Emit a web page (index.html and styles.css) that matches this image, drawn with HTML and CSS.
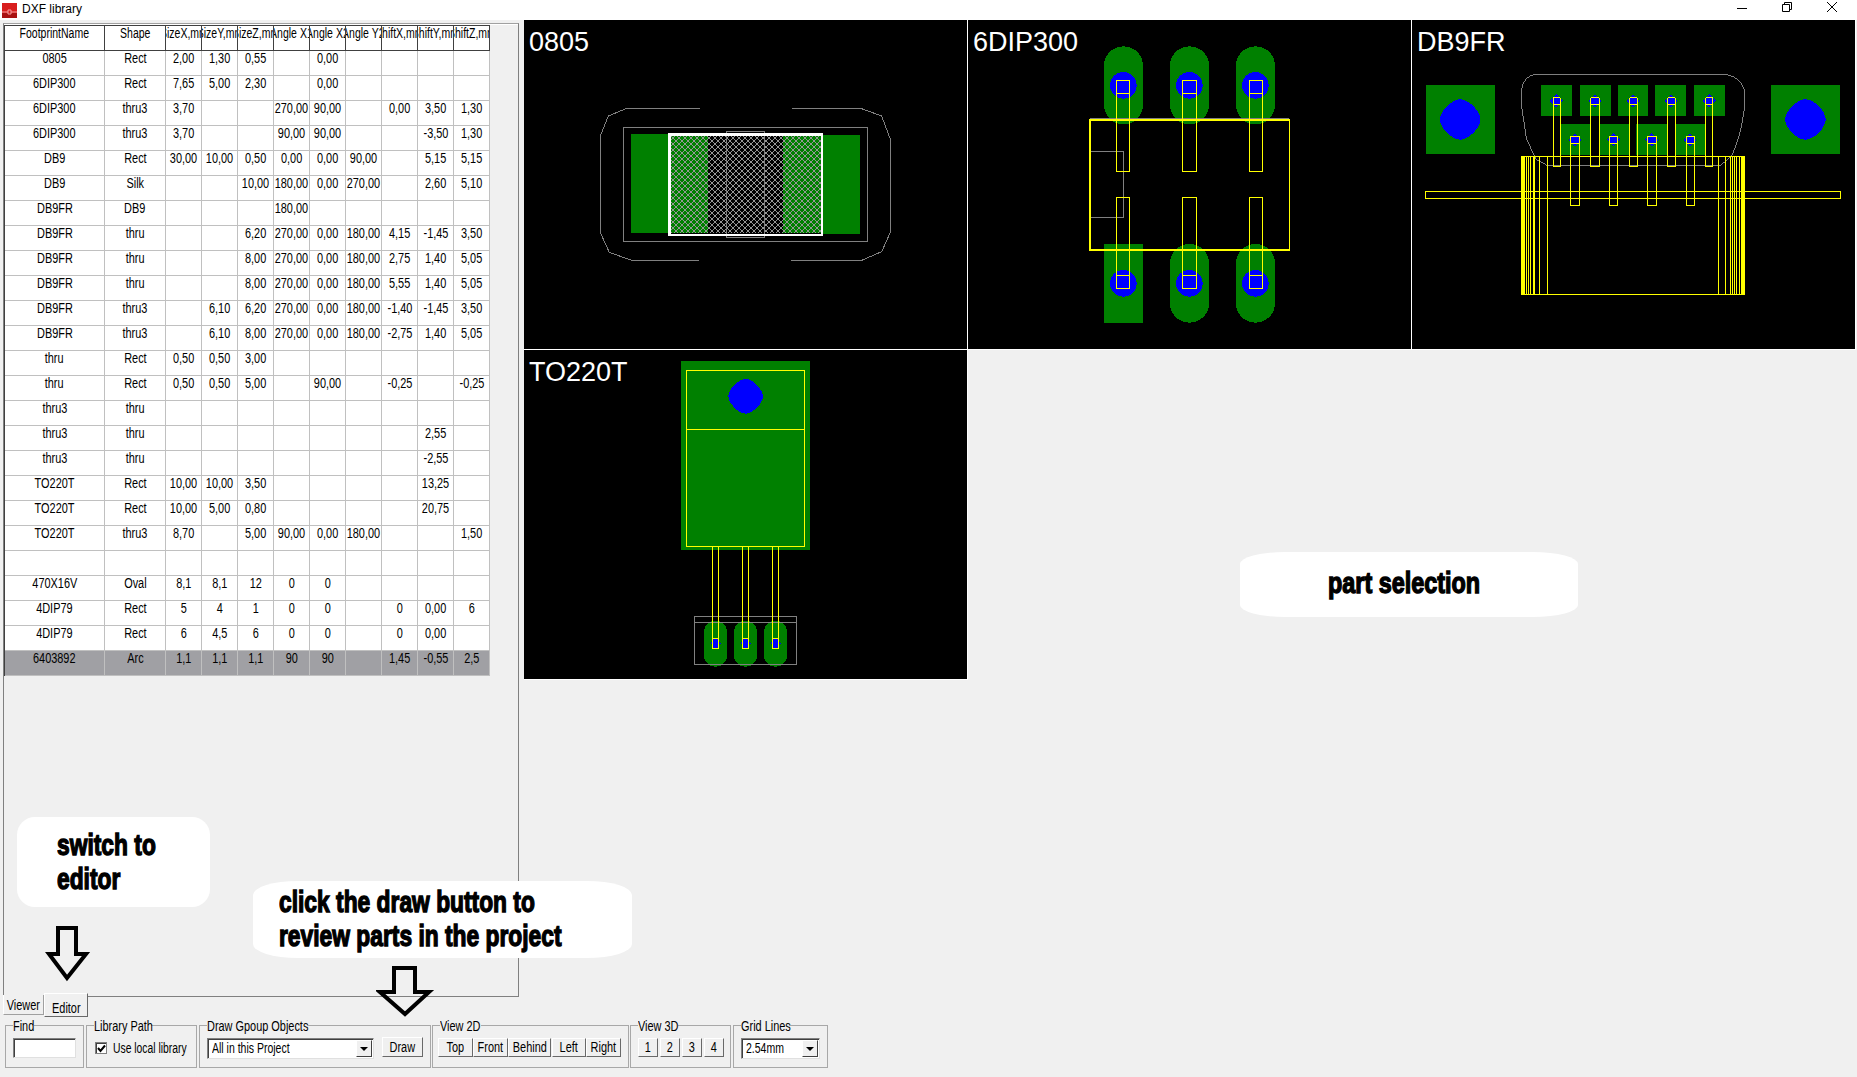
FILE: index.html
```html
<!DOCTYPE html>
<html lang="en">
<head>
<meta charset="utf-8">
<title>DXF library</title>
<link rel="stylesheet" href="styles.css">
</head>
<body>
<div class="window">
  <header class="titlebar">
    <svg class="appicon" width="15" height="15" viewBox="0 0 15 15"><rect width="15" height="15" fill="#d81e1e"/><rect y="10" width="15" height="5" fill="#a81212"/><path d="M0 9H6M9 9H15M6 7H9V11H6Z" fill="none" stroke="#f3a0a0"/></svg>
    <span class="apptitle">DXF library</span>
    <div class="winctl">
      <svg width="12" height="12" viewBox="0 0 12 12"><path d="M1 7.5H11" stroke="#000"/></svg>
      <svg width="12" height="12" viewBox="0 0 12 12"><path d="M1.5 3.5H8.5V10.5H1.5ZM3.5 3.5V1.5H10.5V8.5H8.5" fill="none" stroke="#000"/></svg>
      <svg width="12" height="12" viewBox="0 0 12 12"><path d="M1 1L11 11M11 1L1 11" stroke="#000" fill="none"/></svg>
    </div>
  </header>

  <div class="main">
    <section class="panel">
      <div class="grid">
        <div class="row head"><span><b>FootprintName</b></span><span><b>Shape</b></span><span><b>SizeX,mm</b></span><span><b>SizeY,mm</b></span><span><b>SizeZ,mm</b></span><span><b>Angle X1</b></span><span><b>Angle X2</b></span><span><b>Angle Y2</b></span><span><b>ShiftX,mm</b></span><span><b>ShiftY,mm</b></span><span><b>ShiftZ,mm</b></span></div>
        <div class="row"><span><b>0805</b></span><span><b>Rect</b></span><span><b>2,00</b></span><span><b>1,30</b></span><span><b>0,55</b></span><span></span><span><b>0,00</b></span><span></span><span></span><span></span><span></span></div>
        <div class="row"><span><b>6DIP300</b></span><span><b>Rect</b></span><span><b>7,65</b></span><span><b>5,00</b></span><span><b>2,30</b></span><span></span><span><b>0,00</b></span><span></span><span></span><span></span><span></span></div>
        <div class="row"><span><b>6DIP300</b></span><span><b>thru3</b></span><span><b>3,70</b></span><span></span><span></span><span><b>270,00</b></span><span><b>90,00</b></span><span></span><span><b>0,00</b></span><span><b>3,50</b></span><span><b>1,30</b></span></div>
        <div class="row"><span><b>6DIP300</b></span><span><b>thru3</b></span><span><b>3,70</b></span><span></span><span></span><span><b>90,00</b></span><span><b>90,00</b></span><span></span><span></span><span><b>-3,50</b></span><span><b>1,30</b></span></div>
        <div class="row"><span><b>DB9</b></span><span><b>Rect</b></span><span><b>30,00</b></span><span><b>10,00</b></span><span><b>0,50</b></span><span><b>0,00</b></span><span><b>0,00</b></span><span><b>90,00</b></span><span></span><span><b>5,15</b></span><span><b>5,15</b></span></div>
        <div class="row"><span><b>DB9</b></span><span><b>Silk</b></span><span></span><span></span><span><b>10,00</b></span><span><b>180,00</b></span><span><b>0,00</b></span><span><b>270,00</b></span><span></span><span><b>2,60</b></span><span><b>5,10</b></span></div>
        <div class="row"><span><b>DB9FR</b></span><span><b>DB9</b></span><span></span><span></span><span></span><span><b>180,00</b></span><span></span><span></span><span></span><span></span><span></span></div>
        <div class="row"><span><b>DB9FR</b></span><span><b>thru</b></span><span></span><span></span><span><b>6,20</b></span><span><b>270,00</b></span><span><b>0,00</b></span><span><b>180,00</b></span><span><b>4,15</b></span><span><b>-1,45</b></span><span><b>3,50</b></span></div>
        <div class="row"><span><b>DB9FR</b></span><span><b>thru</b></span><span></span><span></span><span><b>8,00</b></span><span><b>270,00</b></span><span><b>0,00</b></span><span><b>180,00</b></span><span><b>2,75</b></span><span><b>1,40</b></span><span><b>5,05</b></span></div>
        <div class="row"><span><b>DB9FR</b></span><span><b>thru</b></span><span></span><span></span><span><b>8,00</b></span><span><b>270,00</b></span><span><b>0,00</b></span><span><b>180,00</b></span><span><b>5,55</b></span><span><b>1,40</b></span><span><b>5,05</b></span></div>
        <div class="row"><span><b>DB9FR</b></span><span><b>thru3</b></span><span></span><span><b>6,10</b></span><span><b>6,20</b></span><span><b>270,00</b></span><span><b>0,00</b></span><span><b>180,00</b></span><span><b>-1,40</b></span><span><b>-1,45</b></span><span><b>3,50</b></span></div>
        <div class="row"><span><b>DB9FR</b></span><span><b>thru3</b></span><span></span><span><b>6,10</b></span><span><b>8,00</b></span><span><b>270,00</b></span><span><b>0,00</b></span><span><b>180,00</b></span><span><b>-2,75</b></span><span><b>1,40</b></span><span><b>5,05</b></span></div>
        <div class="row"><span><b>thru</b></span><span><b>Rect</b></span><span><b>0,50</b></span><span><b>0,50</b></span><span><b>3,00</b></span><span></span><span></span><span></span><span></span><span></span><span></span></div>
        <div class="row"><span><b>thru</b></span><span><b>Rect</b></span><span><b>0,50</b></span><span><b>0,50</b></span><span><b>5,00</b></span><span></span><span><b>90,00</b></span><span></span><span><b>-0,25</b></span><span></span><span><b>-0,25</b></span></div>
        <div class="row"><span><b>thru3</b></span><span><b>thru</b></span><span></span><span></span><span></span><span></span><span></span><span></span><span></span><span></span><span></span></div>
        <div class="row"><span><b>thru3</b></span><span><b>thru</b></span><span></span><span></span><span></span><span></span><span></span><span></span><span></span><span><b>2,55</b></span><span></span></div>
        <div class="row"><span><b>thru3</b></span><span><b>thru</b></span><span></span><span></span><span></span><span></span><span></span><span></span><span></span><span><b>-2,55</b></span><span></span></div>
        <div class="row"><span><b>TO220T</b></span><span><b>Rect</b></span><span><b>10,00</b></span><span><b>10,00</b></span><span><b>3,50</b></span><span></span><span></span><span></span><span></span><span><b>13,25</b></span><span></span></div>
        <div class="row"><span><b>TO220T</b></span><span><b>Rect</b></span><span><b>10,00</b></span><span><b>5,00</b></span><span><b>0,80</b></span><span></span><span></span><span></span><span></span><span><b>20,75</b></span><span></span></div>
        <div class="row"><span><b>TO220T</b></span><span><b>thru3</b></span><span><b>8,70</b></span><span></span><span><b>5,00</b></span><span><b>90,00</b></span><span><b>0,00</b></span><span><b>180,00</b></span><span></span><span></span><span><b>1,50</b></span></div>
        <div class="row"><span></span><span></span><span></span><span></span><span></span><span></span><span></span><span></span><span></span><span></span><span></span></div>
        <div class="row"><span><b>470X16V</b></span><span><b>Oval</b></span><span><b>8,1</b></span><span><b>8,1</b></span><span><b>12</b></span><span><b>0</b></span><span><b>0</b></span><span></span><span></span><span></span><span></span></div>
        <div class="row"><span><b>4DIP79</b></span><span><b>Rect</b></span><span><b>5</b></span><span><b>4</b></span><span><b>1</b></span><span><b>0</b></span><span><b>0</b></span><span></span><span><b>0</b></span><span><b>0,00</b></span><span><b>6</b></span></div>
        <div class="row"><span><b>4DIP79</b></span><span><b>Rect</b></span><span><b>6</b></span><span><b>4,5</b></span><span><b>6</b></span><span><b>0</b></span><span><b>0</b></span><span></span><span><b>0</b></span><span><b>0,00</b></span><span></span></div>
        <div class="row selected"><span><b>6403892</b></span><span><b>Arc</b></span><span><b>1,1</b></span><span><b>1,1</b></span><span><b>1,1</b></span><span><b>90</b></span><span><b>90</b></span><span></span><span><b>1,45</b></span><span><b>-0,55</b></span><span><b>2,5</b></span></div>
      </div>
    </section>

    <section class="views">
      <figure class="view">
        <figcaption>0805</figcaption>
        <svg class="board" viewBox="12 15 1332 990">
          <defs><pattern id="hatch" width="18" height="18" patternUnits="userSpaceOnUse"><path d="M0 0L18 18M18 0L0 18" class="hl"/></pattern></defs>
          <rect class="g" x="333" y="357" width="112" height="297"/>
          <rect class="g" x="905" y="360" width="115" height="297"/>
          <rect class="g" x="450" y="360" width="115" height="295"/>
          <rect class="g" x="790" y="360" width="115" height="295"/>
          <rect x="450" y="360" width="455" height="295" fill="url(#hatch)"/>
          <path class="s" d="M540 280H320L265 303 242 360V655L268 712 335 736H537"/>
          <path class="s" d="M816 280H1022L1085 303 1112 375V650L1085 710 1025 736H813"/>
          <rect class="s" x="310" y="338" width="733" height="342"/>
          <rect class="s" x="619" y="350" width="115" height="317"/>
          <rect class="w" x="448" y="358" width="457" height="302"/>
        </svg>
      </figure>
      <figure class="view">
        <figcaption>6DIP300</figcaption>
        <svg class="board" viewBox="9 15 1332 990">
          <rect class="g" x="417" y="94" width="117" height="234" rx="58"/>
          <rect class="g" x="615" y="94" width="117" height="234" rx="58"/>
          <rect class="g" x="813" y="94" width="117" height="234" rx="58"/>
          <rect class="g" x="417" y="687" width="117" height="236"/>
          <rect class="g" x="615" y="687" width="117" height="236" rx="58"/>
          <rect class="g" x="813" y="687" width="117" height="236" rx="58"/>
          <circle class="b" cx="475" cy="211" r="40"/><circle class="b" cx="673" cy="211" r="40"/><circle class="b" cx="871" cy="211" r="40"/>
          <circle class="b" cx="475" cy="805" r="40"/><circle class="b" cx="673" cy="805" r="40"/><circle class="b" cx="871" cy="805" r="40"/>
          <path class="s" d="M375 310H973M375 409H476V607H375"/>
          <rect class="y thick" x="374" y="314" width="599" height="391"/>
          <path class="y" d="M454 196H494V469H454ZM454 235H494M652 196H694V469H652ZM652 235H694M853 196H893V469H853ZM853 235H893"/>
          <path class="y" d="M454 547H494V820H454ZM454 781H494M652 547H694V820H652ZM652 781H694M853 547H893V820H853ZM853 781H893"/>
        </svg>
      </figure>
      <figure class="view">
        <figcaption>DB9FR</figcaption>
        <svg class="board" viewBox="6 15 1335 990">
          <path class="s" d="M375 178H950C985 182 1007 210 1007 240V265C1000 330 985 390 965 425L935 450H410L378 432 350 370 335 270V225C340 195 355 182 375 178Z"/>
          <rect class="g" x="48" y="210" width="207" height="207"/><rect class="g" x="1086" y="210" width="207" height="207"/>
          <path class="b" d="M151 252C176 252 212 288 212 313C212 338 176 374 151 374C126 374 90 338 90 313C90 288 126 252 151 252Z"/>
          <path class="b" d="M1189 252C1214 252 1250 288 1250 313C1250 338 1214 374 1189 374C1164 374 1128 338 1128 313C1128 288 1164 252 1189 252Z"/>
          <rect class="g" x="393" y="210" width="93" height="93"/><rect class="g" x="510" y="210" width="93" height="93"/><rect class="g" x="624" y="210" width="93" height="93"/><rect class="g" x="738" y="210" width="93" height="93"/><rect class="g" x="855" y="210" width="93" height="93"/>
          <rect class="g" x="450" y="327" width="93" height="93"/><rect class="g" x="567" y="327" width="93" height="93"/><rect class="g" x="681" y="327" width="93" height="93"/><rect class="g" x="796" y="327" width="93" height="93"/>
          <path class="b" d="M440 237L460 257 440 277 420 257ZM556 237L576 257 556 277 536 257ZM671 237L691 257 671 277 651 257ZM785 237L805 257 785 277 765 257ZM900 237L920 257 900 277 880 257Z"/>
          <path class="b" d="M496 354L516 374 496 394 476 374ZM612 354L632 374 612 394 592 374ZM727 354L747 374 727 394 707 374ZM842 354L862 374 842 394 822 374Z"/>
          <path class="y" d="M430 247H452V455H430ZM430 268H452M544 247H569V455H544ZM544 268H569M661 247H683V455H661ZM661 268H683M775 247H797V455H775ZM775 268H797M889 247H911V455H889ZM889 268H911"/>
          <path class="y" d="M484 364H509V572H484ZM484 385H509M601 364H623V572H601ZM601 385H623M715 364H740V572H715ZM715 385H740M832 364H854V572H832ZM832 385H854"/>
          <rect class="y" x="46" y="529" width="1249" height="22"/>
          <rect class="yf" x="334" y="424" width="11" height="414"/><rect class="yf" x="371" y="424" width="6" height="414"/>
          <rect class="yf" x="996" y="424" width="11" height="414"/>
          <rect class="y" x="334" y="424" width="673" height="414"/>
          <path class="y" d="M350 424V838M356 424V838M362 424V838M390 424V838M412 424V838M929 424V838M949 424V838M965 424V838M970 424V838M977 424V838M983 424V838M990 424V838"/>
        </svg>
      </figure>
      <figure class="view">
        <figcaption>TO220T</figcaption>
        <svg class="board" viewBox="12 15 1332 990">
          <rect class="g" x="483" y="48" width="387" height="567"/>
          <path class="b" d="M677 102C698 102 729 133 729 154C729 175 698 206 677 206C656 206 625 175 625 154C625 133 656 102 677 102Z"/>
          <rect class="y" x="499" y="76" width="355" height="529"/>
          <path class="y" d="M499 253H854"/>
          <rect class="g" x="552" y="827" width="69" height="138" rx="34"/><rect class="g" x="642" y="827" width="69" height="138" rx="34"/><rect class="g" x="732" y="827" width="69" height="138" rx="34"/>
          <path class="b" d="M579 882H595V889L603 895 595 901V909H579V901L571 895 579 889ZM669 882H685V889L693 895 685 901V909H669V901L661 895 669 889ZM759 882H775V889L783 895 775 901V909H759V901L751 895 759 889Z"/>
          <rect class="s" x="523" y="814" width="307" height="144"/>
          <path class="s" d="M523 832H830"/>
          <path class="y" d="M577 605V911H596V605M577 881H596M667 605V911H686V605M667 881H686M757 605V911H776V605M757 881H776"/>
        </svg>
      </figure>
    </section>
  </div>

  <nav class="tabs">
    <span class="tab"><b>Viewer</b></span>
    <span class="tab active"><b>Editor</b></span>
  </nav>

  <div class="toolbar">
    <fieldset class="group find"><legend><b>Find</b></legend><div class="field"></div></fieldset>
    <fieldset class="group libpath"><legend><b>Library Path</b></legend>
      <label class="check"><span class="box"><svg width="9" height="9" viewBox="0 0 9 9"><path d="M1 4L3.5 7 8 1.5" fill="none" stroke="#000" stroke-width="2"/></svg></span><b>Use local library</b></label>
    </fieldset>
    <fieldset class="group drawgroup"><legend><b>Draw Gpoup Objects</b></legend>
      <div class="combo wide"><b>All in this Project</b><span class="drop"><i></i></span></div>
      <button class="btn draw"><b>Draw</b></button>
    </fieldset>
    <fieldset class="group view2d"><legend><b>View 2D</b></legend>
      <div class="btns"><button class="btn w35"><b>Top</b></button><button class="btn w35"><b>Front</b></button><button class="btn w43"><b>Behind</b></button><button class="btn w34"><b>Left</b></button><button class="btn w35"><b>Right</b></button></div>
    </fieldset>
    <fieldset class="group view3d"><legend><b>View 3D</b></legend>
      <div class="btns gap"><button class="btn w20"><b>1</b></button><button class="btn w20"><b>2</b></button><button class="btn w20"><b>3</b></button><button class="btn w20"><b>4</b></button></div>
    </fieldset>
    <fieldset class="group gridlines"><legend><b>Grid Lines</b></legend>
      <div class="combo narrow"><b>2.54mm</b><span class="drop"><i></i></span></div>
    </fieldset>
  </div>

  <aside class="note note-part"><span class="ink">part selection</span></aside>
  <aside class="note note-editor"><span class="ink">switch to<br>editor</span></aside>
  <aside class="note note-draw"><span class="ink">click the draw button to<br>review parts in the project</span></aside>
  <svg class="arrow arrow-editor" width="50" height="62" viewBox="0 0 50 62"><path d="M14 4H32V30H42L23 54 5 30H14Z"/></svg>
  <svg class="arrow arrow-draw" width="60" height="56" viewBox="0 0 60 56"><path d="M18 4H39V28H53L29 50 4 28H18Z"/></svg>
</div>
</body>
</html>
```
FILE: styles.css
```css
* { box-sizing: border-box; }
html, body { margin: 0; padding: 0; }
body { background: #f0f0f0; overflow: hidden; }
.window {
  position: relative;
  width: 1857px;
  height: 1077px;
  display: flex;
  flex-direction: column;
  font-family: "Liberation Sans", sans-serif;
  font-size: 14px;
  color: #000;
  overflow: hidden;
}
/* the app's UI font is tall and narrow: squeeze the text horizontally */
.window b {
  display: inline-block;
  flex: none;
  font-weight: normal;
  white-space: nowrap;
  transform: scaleX(.78);
}

/* title bar */
.titlebar {
  flex: none;
  height: 20px;
  background: #fff;
  display: flex;
  align-items: center;
  padding: 0 0 0 2px;
}
.appicon { margin-right: 5px; }
.apptitle { font: 12px/16px "Liberation Sans", sans-serif; padding-bottom: 2px; }
.winctl { margin-left: auto; display: flex; gap: 33px; padding-right: 19px; padding-bottom: 6px; }

/* main */
.main { flex: none; height: 975px; display: flex; align-items: flex-start; }
.panel {
  width: 516px;
  height: 973px;
  margin: 3px 0 0 3px;
  border-top: 1px solid #a0a0a0;
  border-left: 1px solid #808080;
  border-right: 1px solid #808080;
  padding-top: 1px;
  box-shadow: inset 0 1px 0 #fff;
}
.grid { width: 486px; border-left: 1px solid #404040; border-top: 1px solid #404040; background: #fff; }
.row {
  display: grid;
  grid-template-columns: 100px 61px repeat(9, 36px);
  height: 25px;
  background: #fff;
}
.row span {
  display: flex;
  justify-content: center;
  white-space: nowrap;
  border-right: 1px solid #c0c0c0;
  border-bottom: 1px solid #c0c0c0;
  line-height: 15px;
}
.head span {
  overflow: hidden;
  border-right-color: #404040;
  border-bottom-color: #404040;
}
.window .head b { transform: scaleX(.75); }
.selected { background: #a0a0a4; }

/* drawings */
.views {
  margin-left: 5px;
  display: grid;
  grid-template-columns: repeat(3, 444px);
  grid-auto-rows: 330px;
}
.view {
  position: relative;
  margin: 0;
  background: #000;
  border-right: 1px solid #fff;
  border-bottom: 1px solid #fff;
}
.view figcaption {
  position: absolute;
  left: 5px;
  top: 7px;
  font: 27px/30px "Liberation Sans", sans-serif;
  color: #fff;
}
.board { display: block; width: 444px; height: 330px; shape-rendering: crispEdges; }
.g { fill: #008000; }
.b { fill: #0000ff; }
.yf { fill: #ffff00; }
.y { fill: none; stroke: #ffff00; stroke-width: 3; }
.y.thick { stroke-width: 5; }
.s { fill: none; stroke: #808080; stroke-width: 3; }
.w { fill: none; stroke: #fff; stroke-width: 7; }
.hl { fill: none; stroke: #969696; stroke-width: 3; }

/* tabs */
.tabs { flex: none; height: 22px; margin-top: -2px; padding-left: 3px; display: flex; align-items: flex-start; position: relative; }
.tabs::before { content: ""; position: absolute; left: 88px; width: 431px; top: 3px; height: 1px; background: #808080; }
.tab {
  width: 41px;
  height: 20px;
  margin-top: 2px;
  display: flex;
  justify-content: center;
  line-height: 21px;
  background: #f0f0f0;
  border-right: 1px solid #a0a0a0;
  border-bottom: 1px solid #a0a0a0;
  border-left: 1px solid #fff;
}
.tab.active {
  position: relative;
  width: 44px;
  height: 24px;
  margin-top: 0;
  line-height: 28px;
  border-top: 1px solid #fff;
  border-right: 1px solid #696969;
  border-bottom: 1px solid #696969;
}

/* toolbar */
.toolbar { flex: none; display: flex; gap: 2px; padding-left: 5px; margin-top: 3px; align-items: flex-start; }
.group {
  margin: 0;
  padding: 0 7px;
  height: 50px;
  border: 1px solid #a8a8a8;
  display: flex;
  align-items: flex-start;
  min-width: 0;
}
.group legend { padding: 0 1px 0 0; line-height: 14px; height: 14px; display: flex; }
.window .group legend b { transform-origin: left center; margin-top: 1px; height: 14px; }
.find { width: 79px; }
.find legend { width: 21px; }
.libpath { width: 111px; }
.libpath legend { width: 57px; }
.drawgroup { width: 232px; gap: 8px; }
.drawgroup legend { width: 100px; }
.view2d { width: 197px; margin-left: -1px; }
.view2d legend { width: 41px; }
.view3d { width: 101px; margin-left: -1px; }
.view3d legend { width: 40px; }
.gridlines { width: 95px; }
.gridlines legend { width: 48px; }
.field {
  width: 64px;
  height: 20px;
  margin-top: 6px;
  background: #fff;
  border: 1px solid #808080;
  border-right-color: #e0e0e0;
  border-bottom-color: #e0e0e0;
  box-shadow: inset 1px 1px 0 #404040;
}
.check { display: flex; align-items: center; gap: 6px; margin-top: 8px; margin-left: 1px; white-space: nowrap; }
.window .check b { transform-origin: left center; transform: scaleX(.74); }
.box {
  flex: none;
  width: 12px;
  height: 12px;
  background: #fff;
  border: 1px solid #808080;
  box-shadow: inset 1px 1px 0 #404040;
  display: flex;
  align-items: center;
  justify-content: center;
}
.combo {
  height: 21px;
  margin-top: 6px;
  background: #fff;
  border: 1px solid #808080;
  border-right-color: #e0e0e0;
  border-bottom-color: #e0e0e0;
  box-shadow: inset 1px 1px 0 #404040;
  display: flex;
  align-items: center;
  justify-content: space-between;
  padding: 1px 1px 1px 4px;
  line-height: 17px;
  overflow: hidden;
}
.window .combo b { transform-origin: left center; transform: scaleX(.75); }
.combo.wide { width: 168px; }
.combo.narrow { width: 79px; }
.drop {
  flex: none;
  margin-left: -40px;
  width: 16px;
  height: 17px;
  background: #f0f0f0;
  border-right: 1px solid #404040;
  border-bottom: 1px solid #404040;
  border-left: 1px solid #fff;
  border-top: 1px solid #fff;
  display: flex;
  align-items: center;
  justify-content: center;
}
.drop i { border: 4px solid transparent; border-top: 4px solid #000; border-bottom: 0; }
.btn {
  font: inherit;
  margin: 0;
  padding: 0;
  height: 19px;
  background: #f0f0f0;
  border: 1px solid;
  border-color: #fff #696969 #696969 #fff;
  color: #000;
  line-height: 15px;
  display: flex;
  justify-content: center;
  align-items: center;
}
.btn.draw { flex: none; width: 41px; height: 20px; margin-top: 5px; }
.btns { display: flex; margin-top: 6px; margin-left: -2px; }
.btns.gap { gap: 2px; margin-left: 0; }
.w35 { width: 35px; }
.w43 { width: 43px; margin-right: 1px; }
.w34 { width: 34px; }
.w20 { width: 20px; }

/* overlays */
.note {
  position: absolute;
  background: #fff;
  font-weight: 700;
  font-size: 30px;
  line-height: 34px;
  white-space: nowrap;
}
.ink {
  display: block;
  -webkit-text-stroke: 1.4px #000;
  transform: scaleX(.76);
  transform-origin: left top;
}
.note-part { left: 1240px; top: 552px; width: 338px; height: 65px; border-radius: 45px / 12px; padding: 14px 0 0 88px; }
.note-part .ink { transform: scaleX(.78); }
.note-editor { left: 17px; top: 817px; width: 193px; height: 90px; border-radius: 18px; padding: 11px 0 0 40px; }
.note-draw { left: 253px; top: 881px; width: 379px; height: 77px; border-radius: 45px / 14px; padding: 4px 0 0 26px; }
.arrow { position: absolute; fill: none; stroke: #000; stroke-width: 4; }
.arrow-editor { left: 44px; top: 924px; }
.arrow-draw { left: 376px; top: 964px; }
```
